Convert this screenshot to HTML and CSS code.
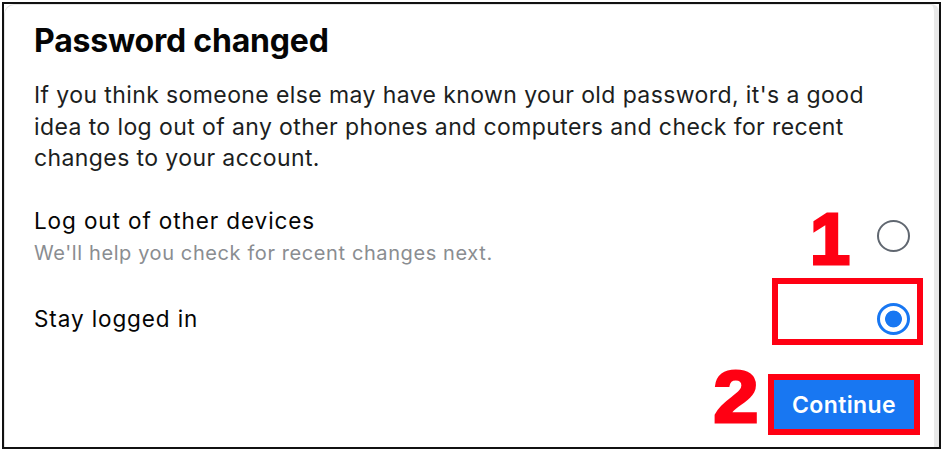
FILE: index.html
```html
<!DOCTYPE html>
<html lang="en">
<head>
<meta charset="utf-8">
<title>Password changed</title>
<link rel="stylesheet" href="styles.css">
</head>
<body>
<div class="frame">
  <div class="card">
    <h1 class="title">Password changed</h1>
    <p class="intro">If you think someone else may have known your old password, it's a good idea to log out of any other phones and computers and check for recent changes to your account.</p>
    <div class="options">
      <label class="option option-logout">
        <span class="option-text">
          <span class="option-label">Log out of other devices</span>
          <span class="option-hint">We'll help you check for recent changes next.</span>
        </span>
        <span class="radio"></span>
        <span class="step step-1">1</span>
      </label>
      <label class="option option-stay">
        <span class="option-text">
          <span class="option-label">Stay logged in</span>
        </span>
        <span class="radio radio-checked"></span>
        <span class="highlight-box"></span>
      </label>
    </div>
    <div class="footer">
      <span class="step step-2">2</span>
      <button class="continue" type="button">Continue</button>
    </div>
  </div>
</div>
</body>
</html>
```
FILE: styles.css
```css
* { box-sizing: border-box; }
html, body { margin: 0; padding: 0; background: #fff; }
body { font-family: Inter, "Liberation Sans", Arial, sans-serif; color: #050505; }

.frame {
  margin: 2px 0 0 2px;
  width: 939px;
  height: 447px;
  border: 2px solid #111;
  background: #fff;
}

.card {
  height: 100%;
  border: 1px solid #e4e4e4;
  border-right: 5px solid #e9e9e9;
  border-bottom: none;
  border-radius: 10px 8px 0 0;
  padding: 0 0 0 29px;
  display: flex;
  flex-direction: column;
}

.title {
  margin: 17px 0 0 0;
  font-size: 32px;
  line-height: 38px;
  font-weight: 700;
  letter-spacing: -0.2px;
}

.intro {
  margin: 20px 0 0 0;
  width: 880px;
  font-size: 23px;
  line-height: 31.5px;
  letter-spacing: 0.4px;
  color: #1c1e21;
}

.options {
  margin-top: 31px;
  display: flex;
  flex-direction: column;
}

.option {
  position: relative;
  display: flex;
  align-items: center;
  justify-content: space-between;
  padding-right: 24px;
}

.option-text { display: flex; flex-direction: column; }

.option-label {
  font-size: 22.5px;
  line-height: 30px;
  letter-spacing: 0.9px;
  color: #050505;
}

.option-hint {
  margin-top: 3px;
  font-size: 20px;
  line-height: 28px;
  letter-spacing: 0.6px;
  color: #8a8d91;
}

.option-stay { margin-top: 36px; }

.radio {
  width: 33px;
  height: 32px;
  border-radius: 50%;
  border: 2.5px solid #606770;
  flex: none;
}

.radio-checked {
  border: 3px solid #1877f2;
  background: radial-gradient(circle, #1877f2 0 8px, #fff 8.8px);
}

.highlight-box {
  position: absolute;
  left: 738px;
  top: -25px;
  width: 151px;
  height: 67px;
  border: 6px solid #ff0013;
}

.step {
  position: absolute;
  font-family: "Liberation Sans", Arial, sans-serif;
  font-weight: 700;
  font-size: 72px;
  line-height: 1;
  color: #ff0013;
  -webkit-text-stroke: 3px #ff0013;
}

.step-1 { left: 776px; top: -3px; }

.footer {
  margin-top: auto;
  margin-bottom: 18px;
  display: flex;
  justify-content: flex-end;
  align-items: flex-end;
  gap: 18px;
  padding-right: 20px;
}

.step-2 { position: static; margin-bottom: -4px; transform: scaleX(1.12); }

.continue {
  width: 140px;
  height: 49px;
  background: #1877f2;
  color: #fff;
  border: none;
  border-radius: 0;
  outline: 6px solid #ff0013;
  font-family: Inter, "Liberation Sans", Arial, sans-serif;
  font-weight: 600;
  font-size: 23px;
  letter-spacing: 0.4px;
  padding: 0;
}
```
